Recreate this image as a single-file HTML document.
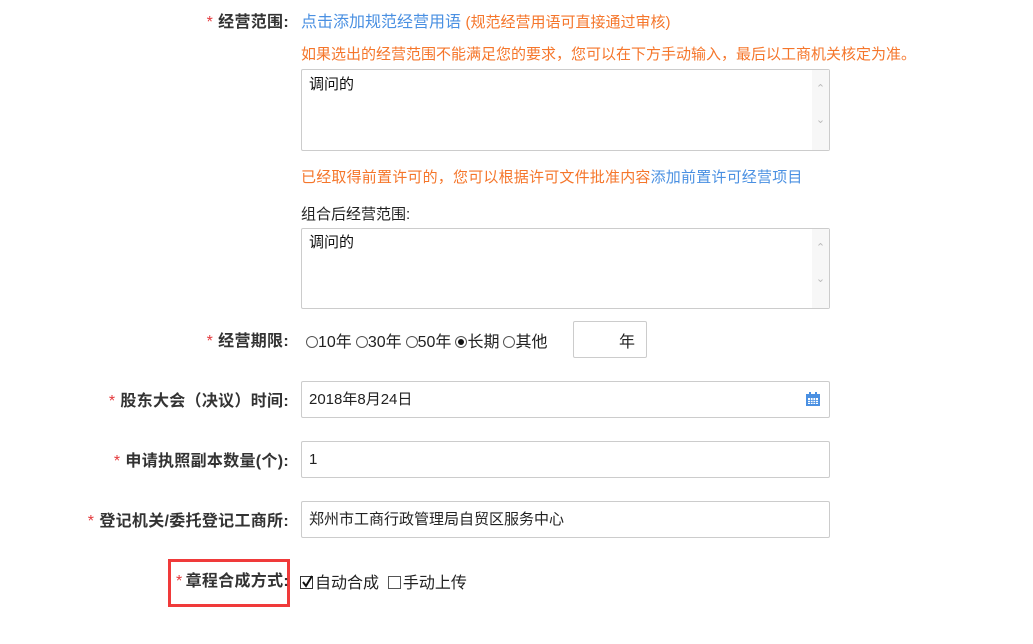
<!DOCTYPE html>
<html><head><meta charset="utf-8"><style>
*{margin:0;padding:0;box-sizing:border-box}
body{width:1033px;height:644px;background:#fff;position:relative;overflow:hidden;font-family:"Liberation Sans","Microsoft YaHei","Noto Sans CJK SC",sans-serif;font-size:15px;color:#333}
.a{position:absolute;white-space:nowrap}
.lbl{position:absolute;right:744px;font-size:16px;font-weight:bold;color:#333;white-space:nowrap;letter-spacing:0.3px}
.lbl i{color:#e4393c;font-style:normal;font-weight:normal;margin-right:5px}
.box{position:absolute;border:1px solid #ccc;border-radius:2px;background:#fff}
.org{color:#f5762b}
.blu{color:#4a90e2}
.sb{position:absolute;right:0;top:0;bottom:0;width:17px;background:#f7f7f7;color:#bbb;font-size:11px;text-align:center}
.inp{padding-left:7px;line-height:35px;color:#222}
.rad{display:inline-block;width:12px;height:12px;border:1px solid #555;border-radius:50%;vertical-align:-1px;position:relative;margin-left:4px}
.rad.on:after{content:"";position:absolute;left:2px;top:2px;width:6px;height:6px;border-radius:50%;background:#111}
.chk{display:inline-block;width:13px;height:13px;border:1px solid #333;vertical-align:-1px;position:relative;margin-right:2px}
</style></head><body>
<div class="lbl" style="top:8px"><i>*</i>经营范围:</div>
<div class="a blu" style="left:301px;top:8px;font-size:16px">点击添加规范经营用语 <span class="org" style="font-size:15px">(规范经营用语可直接通过审核)</span></div>
<div class="a org" style="left:301px;top:43px">如果选出的经营范围不能满足您的要求，您可以在下方手动输入，最后以工商机关核定为准。</div>
<div class="box" style="left:301px;top:69px;width:529px;height:82px"><div class="a" style="left:7px;top:3px;color:#111">调问的</div><div class="sb"><div style="margin-top:12px">&#8963;</div><div style="margin-top:18px">&#8964;</div></div></div>
<div class="a org" style="left:301px;top:166px;letter-spacing:0.2px">已经取得前置许可的，您可以根据许可文件批准内容<span class="blu">添加前置许可经营项目</span></div>
<div class="a" style="left:301px;top:203px;color:#222">组合后经营范围:</div>
<div class="box" style="left:301px;top:228px;width:529px;height:81px"><div class="a" style="left:7px;top:2px;color:#111">调问的</div><div class="sb"><div style="margin-top:12px">&#8963;</div><div style="margin-top:18px">&#8964;</div></div></div>
<div class="lbl" style="top:327px"><i>*</i>经营期限:</div>
<div class="a" style="left:302px;top:328px;color:#222;font-size:16px"><span class="rad"></span>10年<span class="rad"></span>30年<span class="rad"></span>50年<span class="rad on"></span>长期<span class="rad"></span>其他</div>
<div class="box" style="left:573px;top:321px;width:74px;height:37px"><div class="a" style="left:45px;top:6px;font-size:16px;color:#222">年</div></div>
<div class="lbl" style="top:387px"><i>*</i>股东大会（决议）时间:</div>
<div class="box inp" style="left:301px;top:381px;width:529px;height:37px">2018年8月24日
<svg style="position:absolute;left:503px;top:9px" width="16" height="16" viewBox="0 0 16 16"><rect x="1" y="3" width="14" height="12" fill="#4a90e2"/><rect x="3" y="7" width="10" height="6" fill="#fff"/><path d="M3 9.5H13M3 11.5H13M5.5 7V13M8 7V13M10.5 7V13" stroke="#4a90e2" stroke-width=".8"/><rect x="4" y="1" width="2" height="4" fill="#4a90e2"/><rect x="10" y="1" width="2" height="4" fill="#4a90e2"/></svg></div>
<div class="lbl" style="top:447px"><i>*</i>申请执照副本数量(个):</div>
<div class="box inp" style="left:301px;top:441px;width:529px;height:37px">1</div>
<div class="lbl" style="top:507px"><i>*</i>登记机关/委托登记工商所:</div>
<div class="box inp" style="left:301px;top:501px;width:529px;height:37px">郑州市工商行政管理局自贸区服务中心</div>
<div class="a" style="left:168px;top:559px;width:122px;height:48px;border:3px solid #f03a3a"></div>
<div class="lbl" style="top:567px"><i style="margin-right:3px">*</i>章程合成方式:</div>
<div class="a" style="left:300px;top:569px;font-size:16px;color:#222"><span class="chk"><svg style="position:absolute;left:0;top:-2px" width="13" height="14"><path d="M2 7L5 11L11 1" stroke="#111" stroke-width="2" fill="none"/></svg></span>自动合成 &nbsp;<span class="chk" style="border-color:#555"></span>手动上传</div>
</body></html>
